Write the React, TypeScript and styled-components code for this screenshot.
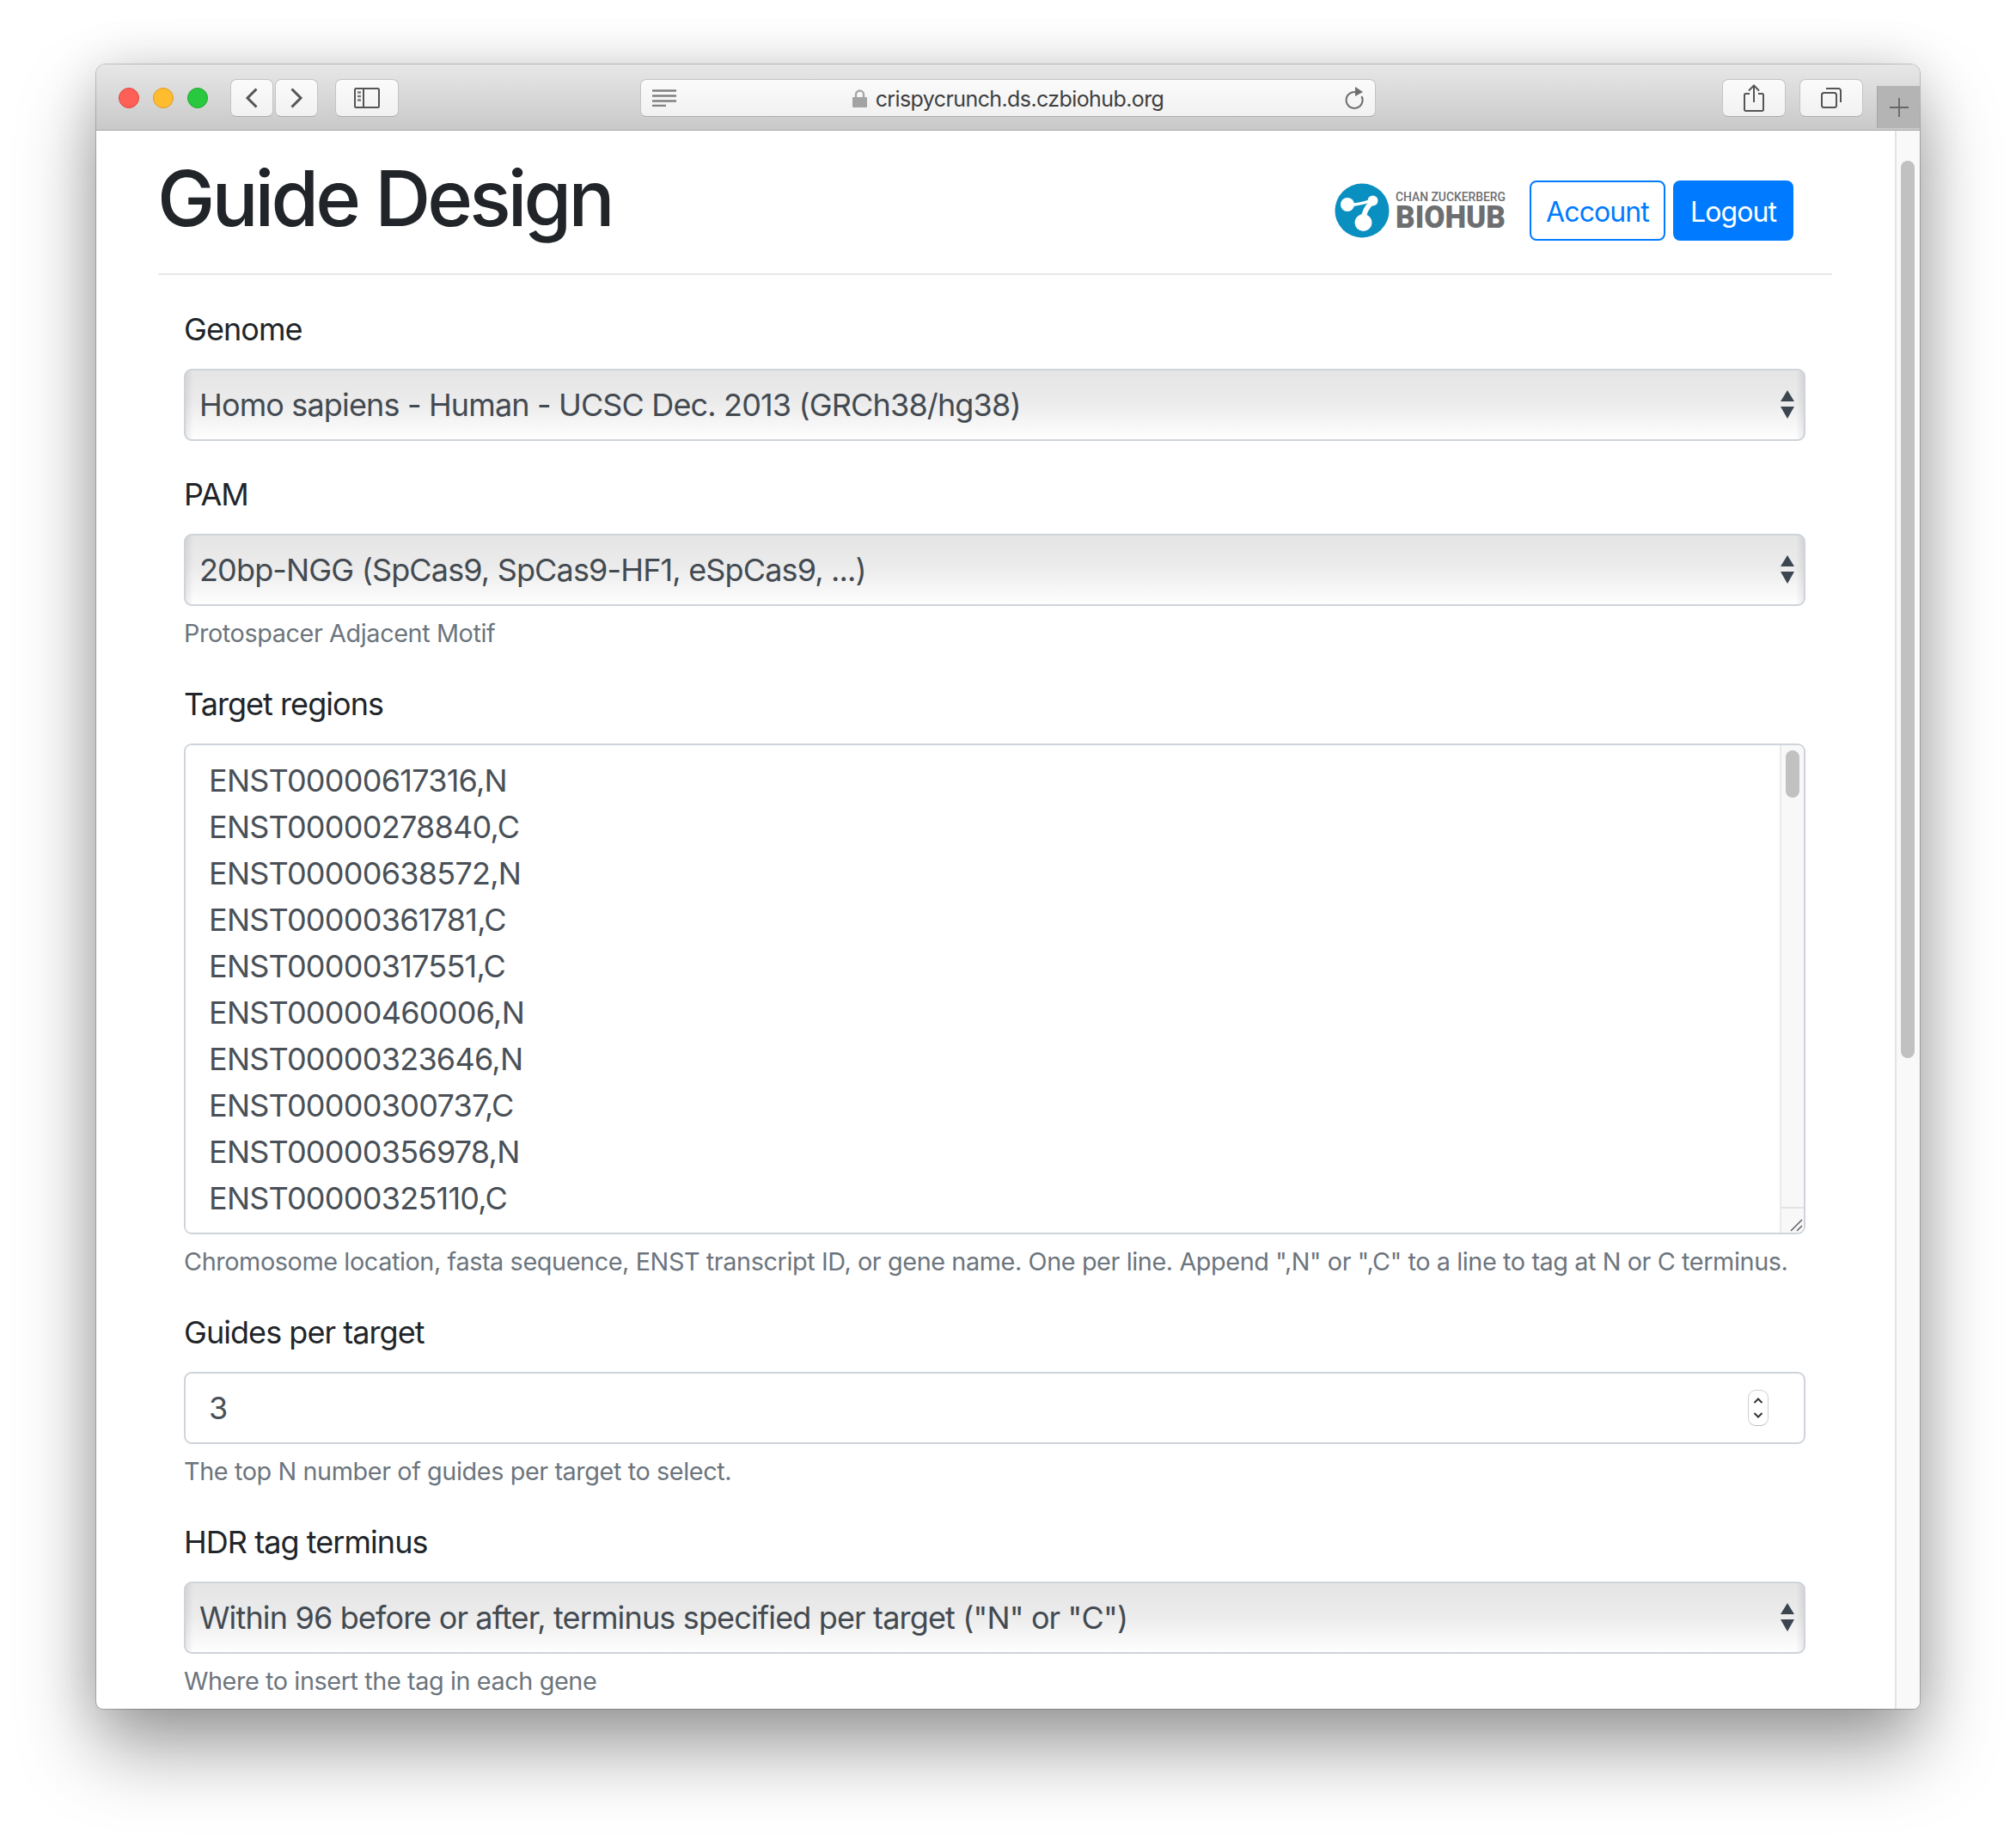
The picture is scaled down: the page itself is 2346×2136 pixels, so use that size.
import React from 'react';
import styled, { createGlobalStyle } from 'styled-components';

const GlobalStyle = createGlobalStyle`
    html, body {
        margin: 0;
        padding: 0;
        background: #fff;
    }
    body {
        font-family: Inter, "Noto Sans", "Liberation Sans", sans-serif;
        color: #212529;
    }
`;

const Page = styled.div`
    width: 2346px;
    height: 2136px;
    padding: 75px 112px 0;
    box-sizing: border-box;
    overflow: hidden;
    background: #fff;
`;

const BrowserWindow = styled.div`
    height: 1913px;
    display: flex;
    flex-direction: column;
    border-radius: 11px 11px 8px 8px;
    background: #fff;
    box-shadow: 0 0 0 1px rgba(0, 0, 0, 0.2), 0 46px 90px rgba(0, 0, 0, 0.38), 0 0 60px rgba(0, 0, 0, 0.12);
    overflow: hidden;
`;

const Toolbar = styled.div`
    height: 77px;
    flex: none;
    display: flex;
    align-items: flex-start;
    padding: 17px 0 0 26px;
    box-sizing: border-box;
    background: linear-gradient(#e7e7e7, #c9c9c9);
    border-bottom: 1px solid #a8a8a8;
`;

const Lights = styled.div`
    display: flex;
    gap: 16px;
    margin-top: 10px;
    margin-right: 26px;
`;

const Light = styled.span<{ $fill: string; $edge: string }>`
    width: 24px;
    height: 24px;
    border-radius: 50%;
    box-sizing: border-box;
    background: ${(p) => p.$fill};
    border: 1px solid ${(p) => p.$edge};
`;

const ToolButton = styled.div<{ $w: number; $ml?: number }>`
    width: ${(p) => p.$w}px;
    height: 44px;
    margin-left: ${(p) => p.$ml ?? 0}px;
    flex: none;
    display: flex;
    align-items: center;
    justify-content: center;
    box-sizing: border-box;
    border: 1px solid #c4c4c4;
    border-bottom-color: #adadad;
    border-radius: 7px;
    background: linear-gradient(#fbfbfb, #f1f1f1);
`;

const UrlBar = styled.div`
    width: 856px;
    height: 44px;
    margin-left: 281px;
    flex: none;
    position: relative;
    display: flex;
    align-items: center;
    justify-content: center;
    box-sizing: border-box;
    border: 1px solid #c4c4c4;
    border-bottom-color: #adadad;
    border-radius: 7px;
    background: linear-gradient(#fbfbfb, #f1f1f1);
`;

const UrlText = styled.span`
    font-size: 25px;
    letter-spacing: -0.6px;
    color: #3f3f3f;
    margin-left: 10px;
    margin-top: 2px;
`;

const ReaderIcon = styled.svg`
    position: absolute;
    left: 13px;
    top: 11px;
`;

const ReloadIcon = styled.svg`
    position: absolute;
    right: 12px;
    top: 7px;
`;

const NewTab = styled.div`
    width: 50px;
    height: 49px;
    margin-left: 16px;
    margin-top: 8px;
    flex: none;
    display: flex;
    align-items: center;
    justify-content: center;
    box-sizing: border-box;
    background: #b4b4b4;
    border-left: 1px solid #a5a5a5;
`;

const Body = styled.div`
    flex: 1;
    min-height: 0;
    display: flex;
`;

const Main = styled.main`
    flex: 1;
    padding: 0 73px 0 72px;
`;

const Header = styled.header`
    height: 166px;
    display: flex;
    align-items: flex-start;
    justify-content: space-between;
    border-bottom: 2px solid #e7e8e9;
`;

const Title = styled.h1`
    margin: 25px 0 0 -1px;
    font-size: 90px;
    line-height: 108px;
    font-weight: 500;
    letter-spacing: -3.9px;
    color: #212529;
`;

const Actions = styled.div`
    display: flex;
    align-items: center;
    margin: 58px 45px 0 0;
    gap: 9px;
`;

const Logo = styled.svg`
    margin-right: 17px;
`;

const Button = styled.button<{ $primary?: boolean }>`
    height: 70px;
    padding: 3px 0 0;
    width: ${(p) => (p.$primary ? 140 : 158)}px;
    box-sizing: border-box;
    font-family: inherit;
    font-size: 32px;
    letter-spacing: -0.9px;
    border-radius: 8px;
    border: 2px solid #007bff;
    color: ${(p) => (p.$primary ? '#fff' : '#007bff')};
    background: ${(p) => (p.$primary ? '#007bff' : '#fff')};
`;

const Form = styled.form`
    padding: 36px 31px 0 30px;
`;

const Group = styled.div`
    margin-bottom: 35px;
`;

const Label = styled.label`
    display: block;
    font-size: 36px;
    line-height: 54px;
    letter-spacing: -0.95px;
    margin-bottom: 19px;
    color: #212529;
`;

const Help = styled.small`
    display: block;
    margin-top: 10px;
    margin-bottom: -1px;
    font-size: 28.8px;
    line-height: 43px;
    letter-spacing: -0.4px;
    color: #6c757d;
`;

const SelectWrap = styled.div`
    position: relative;
    height: 84px;
`;

const Select = styled.select`
    appearance: none;
    display: block;
    width: 100%;
    height: 84px;
    padding: 0 60px 0 16px;
    box-sizing: border-box;
    font-family: inherit;
    font-size: 36px;
    letter-spacing: -0.85px;
    color: #434a51;
    border: 2px solid #ced4da;
    border-radius: 9px;
    background: linear-gradient(90deg, rgba(0, 0, 0, 0.08), rgba(0, 0, 0, 0) 9px, rgba(0, 0, 0, 0) calc(100% - 9px), rgba(0, 0, 0, 0.08)),
        linear-gradient(#e5e5e5, #ebebeb 45%, #fefefe);
`;

const SelectArrows = styled.svg`
    position: absolute;
    right: 13px;
    top: 25px;
    pointer-events: none;
`;

const TextBox = styled.div`
    height: 571px;
    display: flex;
    box-sizing: border-box;
    border: 2px solid #ced4da;
    border-radius: 9px;
    overflow: hidden;
`;

const TextArea = styled.textarea`
    flex: 1;
    display: block;
    padding: 14px 28px 14px 27px;
    border: 0;
    outline: 0;
    resize: none;
    overflow: hidden;
    font-family: inherit;
    font-size: 36px;
    line-height: 54px;
    letter-spacing: -0.75px;
    color: #495057;
`;

const Track = styled.div`
    width: 28px;
    flex: none;
    display: flex;
    flex-direction: column;
    align-items: center;
    box-sizing: border-box;
    background: #f8f8f8;
    border-left: 2px solid #e9e9e9;
`;

const Thumb = styled.div`
    width: 16px;
    height: 55px;
    margin-top: 6px;
    border-radius: 8px;
    background: #c1c1c1;
`;

const Corner = styled.div`
    margin-top: auto;
    width: 100%;
    height: 28px;
    display: flex;
    align-items: flex-end;
    justify-content: flex-end;
    border-top: 2px solid #e2e2e2;
`;

const NumberWrap = styled.div`
    position: relative;
    height: 84px;
`;

const NumberInput = styled.input`
    display: block;
    width: 100%;
    height: 84px;
    padding: 0 27px;
    box-sizing: border-box;
    font-family: inherit;
    font-size: 36px;
    color: #495057;
    border: 2px solid #ced4da;
    border-radius: 9px;
    background: #fff;
`;

const Stepper = styled.div`
    position: absolute;
    right: 43px;
    top: 21px;
    width: 24px;
    height: 42px;
    display: flex;
    align-items: center;
    justify-content: center;
    box-sizing: border-box;
    border: 1px solid #d0d0d0;
    border-bottom-color: #bdbdbd;
    border-radius: 9px;
    background: #fff;
`;

const PageScroll = styled.div`
    width: 29px;
    flex: none;
    box-sizing: border-box;
    padding: 35px 0 0 5px;
    background: #f9f9f9;
    border-left: 2px solid #e3e3e3;
`;

const PageThumb = styled.div`
    width: 16px;
    height: 1044px;
    border-radius: 8px;
    background: #c1c1c1;
`;

const targets = [
    'ENST00000617316,N',
    'ENST00000278840,C',
    'ENST00000638572,N',
    'ENST00000361781,C',
    'ENST00000317551,C',
    'ENST00000460006,N',
    'ENST00000323646,N',
    'ENST00000300737,C',
    'ENST00000356978,N',
    'ENST00000325110,C',
];

const Arrows = () => (
    <SelectArrows width="16" height="33" viewBox="0 0 16 33">
        <path d="M8 0 L16 13 H0 Z M8 33 L0 19 H16 Z" fill="#3c4650" />
    </SelectArrows>
);

export default function App() {
    return (
        <Page>
            <GlobalStyle />
            <BrowserWindow>
                <Toolbar>
                    <Lights>
                        <Light $fill="#fe5f57" $edge="#e2463f" />
                        <Light $fill="#febc2e" $edge="#dd9d22" />
                        <Light $fill="#28c83f" $edge="#1eab2c" />
                    </Lights>
                    <ToolButton $w={50}>
                        <svg width="16" height="24" viewBox="0 0 16 24" fill="none">
                            <path d="M13.5 1.5 L3 12 L13.5 22.5" stroke="#555" strokeWidth="3" />
                        </svg>
                    </ToolButton>
                    <ToolButton $w={50} $ml={2}>
                        <svg width="16" height="24" viewBox="0 0 16 24" fill="none">
                            <path d="M2.5 1.5 L13 12 L2.5 22.5" stroke="#555" strokeWidth="3" />
                        </svg>
                    </ToolButton>
                    <ToolButton $w={74} $ml={20}>
                        <svg width="30" height="24" viewBox="0 0 30 24" fill="none">
                            <rect x="1" y="1" width="28" height="22" rx="1.5" stroke="#555" strokeWidth="2" />
                            <path d="M11 1 V23" stroke="#555" strokeWidth="2" />
                            <path d="M4 5.5 H8 M4 10 H8 M4 14.5 H8" stroke="#777" strokeWidth="2.5" />
                        </svg>
                    </ToolButton>
                    <UrlBar>
                        <ReaderIcon width="28" height="20" viewBox="0 0 28 20">
                            <path d="M0 1.5 H28 M0 7.5 H28 M0 13.5 H28 M0 19 H16" stroke="#808080" strokeWidth="2.5" />
                        </ReaderIcon>
                        <svg width="17" height="21" viewBox="0 0 17 21">
                            <path d="M4 10 V6 a4.5 4.5 0 0 1 9 0 V10" fill="none" stroke="#a8a8a8" strokeWidth="2.4" />
                            <rect x="0" y="9" width="17" height="12" rx="1" fill="#a3a3a3" />
                        </svg>
                        <UrlText>crispycrunch.ds.czbiohub.org</UrlText>
                        <ReloadIcon width="24" height="28" viewBox="0 0 24 28" fill="none">
                            <path d="M13 7 A9.5 9.5 0 1 0 20.5 12" stroke="#6e6e6e" strokeWidth="2" />
                            <path d="M13 1 L22 7 L13 12 Z" fill="#6e6e6e" />
                        </ReloadIcon>
                    </UrlBar>
                    <ToolButton $w={74} $ml={403}>
                        <svg width="24" height="32" viewBox="0 0 24 32" fill="none">
                            <path d="M7 11 H2.5 A1.5 1.5 0 0 0 1 12.5 V29.5 A1.5 1.5 0 0 0 2.5 31 H21.5 A1.5 1.5 0 0 0 23 29.5 V12.5 A1.5 1.5 0 0 0 21.5 11 H17" stroke="#555" strokeWidth="2" />
                            <path d="M12 21 V2 M6 7.5 L12 1.5 L18 7.5" stroke="#555" strokeWidth="2" />
                        </svg>
                    </ToolButton>
                    <ToolButton $w={74} $ml={16}>
                        <svg width="24" height="24" viewBox="0 0 24 24" fill="none">
                            <rect x="1" y="6" width="17" height="17" rx="2.5" stroke="#555" strokeWidth="2" />
                            <path d="M6 1 H20.5 A2.5 2.5 0 0 1 23 3.5 V17" stroke="#555" strokeWidth="2" />
                        </svg>
                    </ToolButton>
                    <NewTab>
                        <svg width="22" height="22" viewBox="0 0 22 22">
                            <path d="M11 0 V22 M0 11 H22" stroke="#666" strokeWidth="1.8" />
                        </svg>
                    </NewTab>
                </Toolbar>
                <Body>
                    <Main>
                        <Header>
                            <Title>Guide Design</Title>
                            <Actions>
                                <Logo width="201" height="64" viewBox="0 0 201 64">
                                    <circle cx="32" cy="32" r="31.5" fill="#0a8fc1" />
                                    <path d="M16 25 C26 26 34 23 44 20" fill="none" stroke="#fff" strokeWidth="3.5" />
                                    <path d="M33.5 46 C33 36 37 28 44 22" fill="none" stroke="#fff" strokeWidth="6" />
                                    <circle cx="15" cy="25" r="8" fill="#fff" />
                                    <circle cx="44.5" cy="20.5" r="6" fill="#fff" />
                                    <circle cx="33.5" cy="46" r="10" fill="#fff" />
                                    <text x="71" y="21" fontFamily="Roboto, sans-serif" fontWeight="500" fontSize="14.5" fill="#6d6e70" textLength="128" lengthAdjust="spacingAndGlyphs">CHAN ZUCKERBERG</text>
                                    <text x="71" y="52" fontFamily="Roboto, sans-serif" fontWeight="900" fontSize="37" fill="#6d6e70" textLength="128" lengthAdjust="spacingAndGlyphs">BIOHUB</text>
                                </Logo>
                                <Button type="button">Account</Button>
                                <Button type="button" $primary>Logout</Button>
                            </Actions>
                        </Header>
                        <Form>
                            <Group>
                                <Label>Genome</Label>
                                <SelectWrap>
                                    <Select defaultValue="hg38">
                                        <option value="hg38">Homo sapiens - Human - UCSC Dec. 2013 (GRCh38/hg38)</option>
                                    </Select>
                                    <Arrows />
                                </SelectWrap>
                            </Group>
                            <Group>
                                <Label>PAM</Label>
                                <SelectWrap>
                                    <Select defaultValue="ngg">
                                        <option value="ngg">20bp-NGG (SpCas9, SpCas9-HF1, eSpCas9, ...)</option>
                                    </Select>
                                    <Arrows />
                                </SelectWrap>
                                <Help>Protospacer Adjacent Motif</Help>
                            </Group>
                            <Group>
                                <Label>Target regions</Label>
                                <TextBox>
                                    <TextArea defaultValue={targets.join('\n')} spellCheck={false} />
                                    <Track>
                                        <Thumb />
                                        <Corner>
                                            <svg width="18" height="18" viewBox="0 0 18 18">
                                                <path d="M3 16 L16 3 M10 16 L16 10" stroke="#666" strokeWidth="1.6" />
                                            </svg>
                                        </Corner>
                                    </Track>
                                </TextBox>
                                <Help>Chromosome location, fasta sequence, ENST transcript ID, or gene name. One per line. Append ",N" or ",C" to a line to tag at N or C terminus.</Help>
                            </Group>
                            <Group>
                                <Label>Guides per target</Label>
                                <NumberWrap>
                                    <NumberInput type="text" defaultValue="3" />
                                    <Stepper>
                                        <svg width="12" height="26" viewBox="0 0 12 26" fill="none">
                                            <path d="M1.5 7 L6 2.5 L10.5 7 M1.5 19 L6 23.5 L10.5 19" stroke="#333" strokeWidth="2" />
                                        </svg>
                                    </Stepper>
                                </NumberWrap>
                                <Help>The top N number of guides per target to select.</Help>
                            </Group>
                            <Group>
                                <Label>HDR tag terminus</Label>
                                <SelectWrap>
                                    <Select defaultValue="both">
                                        <option value="both">Within 96 before or after, terminus specified per target ("N" or "C")</option>
                                    </Select>
                                    <Arrows />
                                </SelectWrap>
                                <Help>Where to insert the tag in each gene</Help>
                            </Group>
                        </Form>
                    </Main>
                    <PageScroll>
                        <PageThumb />
                    </PageScroll>
                </Body>
            </BrowserWindow>
        </Page>
    );
}
